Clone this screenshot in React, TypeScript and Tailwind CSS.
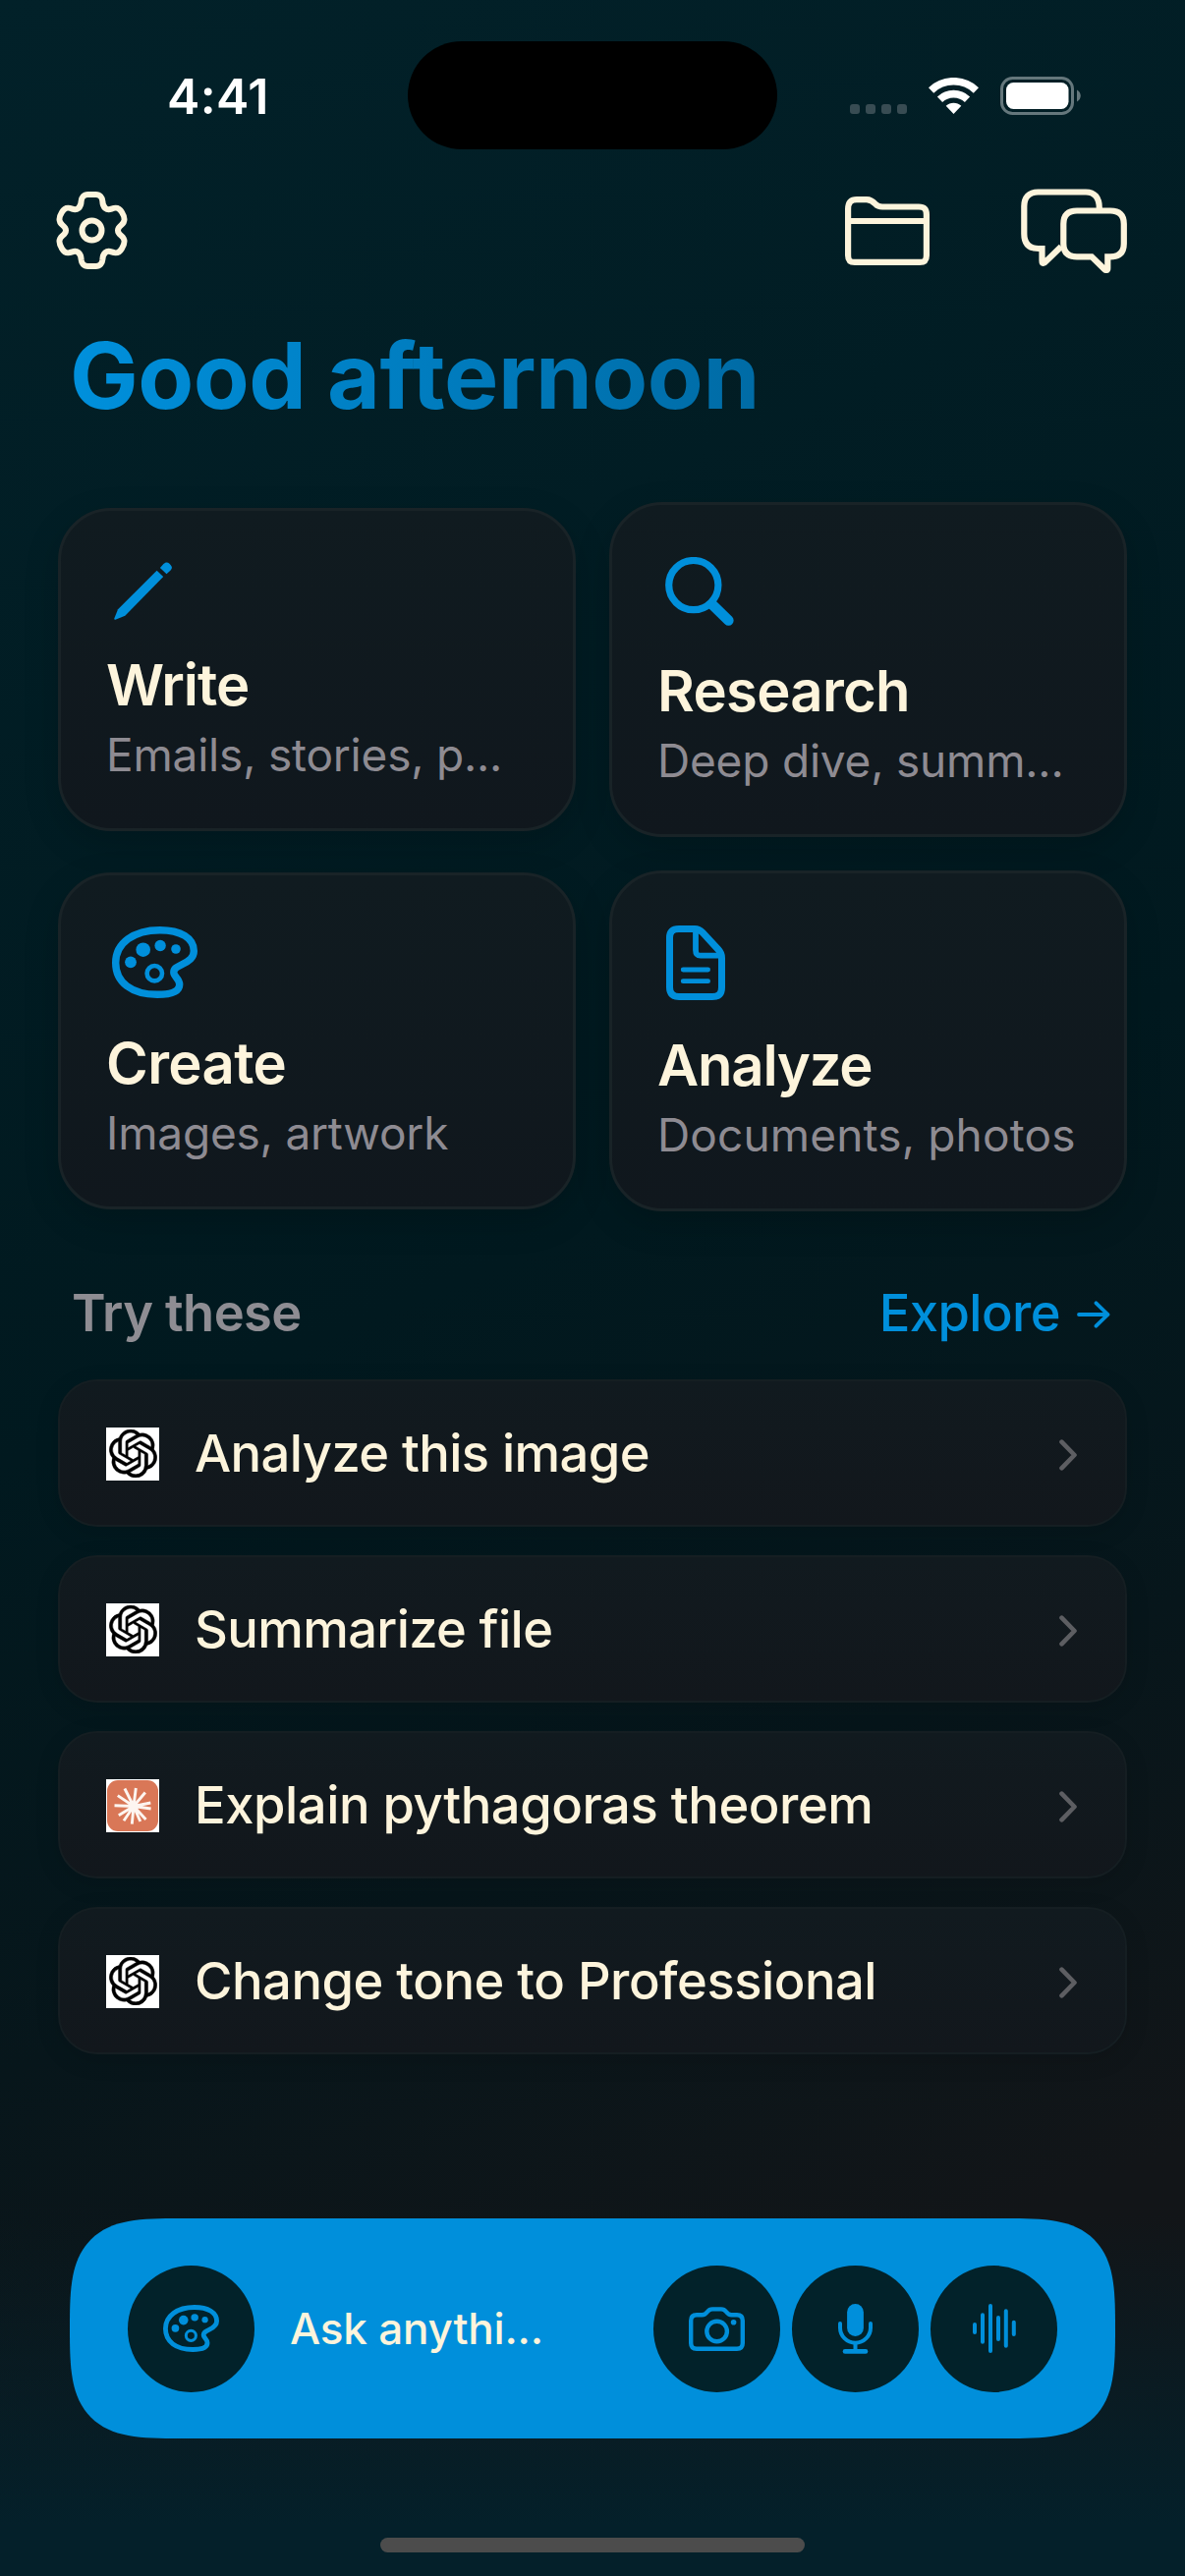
import type { ReactNode } from 'react';

function GearIcon() {
  return (
    <svg width="73" height="79" viewBox="0 0 73 79" fill="none" stroke="currentColor" strokeWidth="6">
      <path d="M32.5 3H40.5C45 3 47 6 47.3 9.5C47.6 16.5 51.5 19.5 56.5 17.6C61.5 15.6 64.5 16.6 67 21C71 27.5 70 31 66.5 34C61.8 37.8 61.8 41.2 66.5 45C70 48 71 51.5 67 58C64.5 62.4 61.5 63.4 56.5 61.4C51.5 59.5 47.6 62.5 47.3 69.5C47 73 45 76 40.5 76H32.5C28 76 26 73 25.7 69.5C25.4 62.5 21.5 59.5 16.5 61.4C11.5 63.4 8.5 62.4 6 58C2 51.5 3 48 6.5 45C11.2 41.2 11.2 37.8 6.5 34C3 31 2 27.5 6 21C8.5 16.6 11.5 15.6 16.5 17.6C21.5 19.5 25.4 16.5 25.7 9.5C26 6 28 3 32.5 3Z" />
      <circle cx="36.5" cy="39.5" r="10" />
    </svg>
  );
}

function FolderIcon() {
  return (
    <svg width="86" height="70" viewBox="0 0 86 70" fill="none" stroke="currentColor" strokeWidth="6.2">
      <path d="M3.1 13C3.1 6 6 3.1 12 3.1H22C26.5 3.1 28.5 5 31 7.8C33 10 34.5 10.5 38 10.5H75C81 10.5 82.9 13 82.9 18.5V60C82.9 65 81 66.9 76 66.9H10C5 66.9 3.1 65 3.1 60Z" />
      <path d="M3 25H83" />
    </svg>
  );
}

function ChatIcon() {
  return (
    <svg width="108" height="86" viewBox="0 0 108 86" fill="none" stroke="currentColor" strokeWidth="6.2">
      <path d="M79.8 20C79.8 9 75 3.5 66 3.5H17.5C8 3.5 3.3 9 3.3 18V46C3.3 56 8 61 18 61H21.5V73.5C21.5 76.5 23.5 76.5 25.5 74L41 59" />
      <path d="M57 22.5H91C100 22.5 104.8 27 104.8 36V56C104.8 65 100 69.3 91 69.3H88.3V81C88.3 83.5 86.5 83.5 85 82L72 69.3H57C48 69.3 43.3 65 43.3 56V36C43.3 27 48 22.5 57 22.5Z" />
    </svg>
  );
}

function PencilIcon() {
  return (
    <svg width="59" height="59" viewBox="0 0 59 59" fill="currentColor">
      <path d="M50.4 2C52.3 0 54.6 -0.2 56.5 1.8L57.6 3C59.4 4.9 59.4 6.8 57.6 8.5L53.5 12.2L46.9 5.9Z" />
      <path d="M43.6 8.7L50.2 15L11.3 54.7L1.4 58.7C0.5 59 0 58.4 0.3 57.6L4 48.3Z" />
    </svg>
  );
}

function SearchIcon() {
  return (
    <svg width="70" height="70" viewBox="0 0 70 70" fill="none" stroke="currentColor">
      <circle cx="28.8" cy="28.6" r="25.1" strokeWidth="7.2" />
      <path d="M48 48.5L64.4 64.6" strokeWidth="10.5" strokeLinecap="round" />
    </svg>
  );
}

function PaletteIcon({ className }: { className: string }) {
  return (
    <svg className={className} viewBox="0 0 87 73" fill="none" stroke="currentColor" strokeWidth="7.4">
      <path d="M48.7 3.7C70 3.7 83.3 12 83.3 25C83.3 32 78 35.2 72 38.2C65 41.7 62.8 43 62.8 46.8C62.8 51 68.7 53 68.7 59C68.7 66 60 69.3 46 69.3C20 69.3 3.7 57 3.7 37C3.7 17 22 3.7 48.7 3.7Z" />
      <circle cx="43.3" cy="47.7" r="7.7" strokeWidth="4.6" />
      <g fill="currentColor" stroke="none">
        <circle cx="19" cy="36.3" r="5.9" />
        <circle cx="31.7" cy="23.7" r="7.3" />
        <circle cx="49.1" cy="19.5" r="5.7" />
        <circle cx="65" cy="23" r="4.8" />
      </g>
    </svg>
  );
}

function DocumentIcon() {
  return (
    <svg width="60" height="76" viewBox="0 0 60 76" fill="none" stroke="currentColor">
      <path
        d="M13 3.5H29C33 3.5 34.5 4.5 37 7.2L53 24.5C55.8 27.5 56.5 29 56.5 33V63C56.5 70 53 72.5 47 72.5H13C6.5 72.5 3.5 69 3.5 63V12.5C3.5 6 6.5 3.5 13 3.5Z"
        strokeWidth="7"
      />
      <path d="M30 5V25C30 29 31.5 30.7 35 30.7H56" strokeWidth="5.8" />
      <path d="M17.2 45H42.6M17.2 56.7H42.6" strokeWidth="4.8" strokeLinecap="round" />
    </svg>
  );
}

function CameraIcon() {
  return (
    <svg width="57" height="45" viewBox="0 0 57 45" fill="none" stroke="currentColor" strokeWidth="4.4">
      <path d="M8 8.3H13.5C16.5 8.3 17.5 7 19 5C20.5 3 21.5 2.4 24 2.4H33C35.5 2.4 36.5 3 38 5C39.5 7 40.5 8.3 43.5 8.3H49C53 8.3 54.8 10 54.8 14V37C54.8 41 53 42.7 49 42.7H8C4 42.7 2.2 41 2.2 37V14C2.2 10 4 8.3 8 8.3Z" />
      <circle cx="28.6" cy="25" r="10.3" />
      <circle cx="45.6" cy="15.7" r="2.8" fill="currentColor" stroke="none" />
    </svg>
  );
}

function MicIcon() {
  return (
    <svg width="35" height="51" viewBox="0 0 35 51" fill="none" stroke="currentColor" strokeWidth="4" strokeLinecap="round">
      <rect x="9.1" y="0" width="16.8" height="33" rx="8.4" fill="currentColor" stroke="none" />
      <path d="M2 20V24.2A15.5 15.5 0 0 0 33 24.2V20" />
      <path d="M17.5 40V48" />
      <path d="M7 48.4H28" strokeWidth="4.6" />
    </svg>
  );
}

function WaveIcon() {
  return (
    <svg width="44" height="50" viewBox="0 0 44 50" stroke="currentColor" strokeWidth="4" strokeLinecap="round">
      <path d="M2 21V29M10 11.3V38.7M18 2V48M26 14V36M33.8 7.3V42.7M41.8 18.7V31" />
    </svg>
  );
}

function OpenAILogo() {
  return (
    <div className="mt-px flex size-[54px] shrink-0 items-center justify-center bg-white">
      <svg width="49" height="49" viewBox="0 0 24 24" fill="#000" stroke="#000" strokeWidth="0.25">
        <path d="M22.2819 9.8211a5.9847 5.9847 0 0 0-.5157-4.9108 6.0462 6.0462 0 0 0-6.5098-2.9A6.0651 6.0651 0 0 0 4.9807 4.1818a5.9847 5.9847 0 0 0-3.9977 2.9 6.0462 6.0462 0 0 0 .7427 7.0966 5.98 5.98 0 0 0 .511 4.9107 6.051 6.051 0 0 0 6.5146 2.9001A5.9847 5.9847 0 0 0 13.2599 24a6.0557 6.0557 0 0 0 5.7718-4.2058 5.9894 5.9894 0 0 0 3.9977-2.9001 6.0557 6.0557 0 0 0-.7475-7.0729zm-9.022 12.6081a4.4755 4.4755 0 0 1-2.8764-1.0408l.1419-.0804 4.7783-2.7582a.7948.7948 0 0 0 .3927-.6813v-6.7369l2.02 1.1686a.071.071 0 0 1 .038.052v5.5826a4.504 4.504 0 0 1-4.4945 4.4944zm-9.6607-4.1254a4.4708 4.4708 0 0 1-.5346-3.0137l.142.0852 4.783 2.7582a.7712.7712 0 0 0 .7806 0l5.8428-3.3685v2.3324a.0804.0804 0 0 1-.0332.0615L9.74 19.9502a4.4992 4.4992 0 0 1-6.1408-1.6464zM2.3408 7.8956a4.485 4.485 0 0 1 2.3655-1.9728V11.6a.7664.7664 0 0 0 .3879.6765l5.8144 3.3543-2.0201 1.1685a.0757.0757 0 0 1-.071 0l-4.8303-2.7865A4.504 4.504 0 0 1 2.3408 7.872zm16.5963 3.8558L13.1038 8.364 15.1192 7.2a.0757.0757 0 0 1 .071 0l4.8303 2.7913a4.4944 4.4944 0 0 1-.6765 8.1042v-5.6772a.79.79 0 0 0-.407-.667zm2.0107-3.0231l-.142-.0852-4.7735-2.7818a.7759.7759 0 0 0-.7854 0L9.409 9.2297V6.8974a.0662.0662 0 0 1 .0284-.0615l4.8303-2.7866a4.4992 4.4992 0 0 1 6.6802 4.66zM8.3065 12.863l-2.02-1.1638a.0804.0804 0 0 1-.038-.0567V6.0742a4.4992 4.4992 0 0 1 7.3757-3.4537l-.142.0805L8.704 5.459a.7948.7948 0 0 0-.3927.6813zm1.0976-2.3654l2.602-1.4998 2.6069 1.4998v2.9994l-2.5974 1.4997-2.6067-1.4997Z" />
      </svg>
    </div>
  );
}

function ClaudeLogo() {
  return (
    <svg className="mt-px shrink-0" width="54" height="54" viewBox="0 0 54 54">
      <rect width="54" height="54" fill="#fff" />
      <rect x="1" y="1" width="52" height="52" rx="11" fill="#d97757" />
      <path
        d="M28 27.5L18.9 9.5M28 27.5L30.3 9M28 27.5L39.8 13.5M28 27.5L45.3 24M28 27.5L45.6 30M28 27.5L40.5 41M28 27.5L34.8 43M28 27.5L26.3 45.6M28 27.5L18 42.3M28 27.5L12.8 36.8M28 27.5L8.5 26.8M28 27.5L11.8 16.6"
        stroke="#fdf5f0"
        strokeWidth="2.9"
      />
      <circle cx="28" cy="27.5" r="5" fill="#fdf5f0" />
    </svg>
  );
}

function StatusBar() {
  return (
    <div className="grid h-[194px] grid-cols-[415px_376px_1fr] items-center">
      <div className="pt-px pl-[170px] text-[50px] leading-[60px] font-semibold tracking-[0.4px] text-white">4:41</div>
      <div className="h-[110px] rounded-full bg-black" />
      <div className="flex items-center pl-[74px]">
        <div className="mt-[28px] flex gap-[6px]">
          {[0, 1, 2, 3].map((i) => (
            <div key={i} className="size-[10px] rounded-[3px] bg-[#384c53]" />
          ))}
        </div>
        <svg className="ml-[22px]" width="51" height="37" viewBox="0 0 51 37" fill="none" stroke="#fff" strokeWidth="7.6">
          <path d="M2.6 12.9A33.2 33.2 0 0 1 48.4 12.9" />
          <path d="M11.5 22.2A20.4 20.4 0 0 1 39.5 22.2" />
          <path d="M25.5 37L17.7 28.8A11.3 11.3 0 0 1 33.3 28.8Z" fill="#fff" stroke="none" />
        </svg>
        <svg className="ml-[22px]" width="82" height="39" viewBox="0 0 82 39" fill="none">
          <rect x="1.5" y="1.5" width="72" height="36" rx="11" stroke="#65777c" strokeWidth="3" />
          <rect x="6" y="6" width="63.5" height="27" rx="7.5" fill="#fff" />
          <path d="M78 13.5C83 16 83 23 78 25.5Z" fill="#65777c" />
        </svg>
      </div>
    </div>
  );
}

const actions = [
  {
    title: 'Write',
    titleTracking: 'tracking-[-1px]',
    subtitle: 'Emails, stories, p...',
    subtitleTracking: 'tracking-[-0.2px]',
    icon: <PencilIcon />,
    height: 'h-[329px]',
    iconOffset: 'ml-[8px]',
  },
  {
    title: 'Research',
    titleTracking: 'tracking-[-0.7px]',
    subtitle: 'Deep dive, summ...',
    subtitleTracking: 'tracking-[-0.2px]',
    icon: <SearchIcon />,
    height: 'h-[341px]',
    iconOffset: 'ml-[8px]',
  },
  {
    title: 'Create',
    titleTracking: 'tracking-[-0.6px]',
    subtitle: 'Images, artwork',
    subtitleTracking: 'tracking-[-0.2px]',
    icon: <PaletteIcon className="h-[73px] w-[87px]" />,
    height: 'h-[343px]',
    iconOffset: 'ml-[6px]',
  },
  {
    title: 'Analyze',
    titleTracking: 'tracking-[-1.2px]',
    subtitle: 'Documents, photos',
    subtitleTracking: 'tracking-[0.15px]',
    icon: <DocumentIcon />,
    height: 'h-[347px]',
    iconOffset: 'ml-[9px]',
  },
];

const suggestions = [
  { label: 'Analyze this image', logo: <OpenAILogo />, tracking: 'tracking-[-0.6px]' },
  { label: 'Summarize file', logo: <OpenAILogo />, tracking: 'tracking-[-0.65px]' },
  { label: 'Explain pythagoras theorem', logo: <ClaudeLogo />, tracking: 'tracking-[-0.45px]' },
  { label: 'Change tone to Professional', logo: <OpenAILogo />, tracking: 'tracking-[-0.5px]' },
];

function RoundButton({ children }: { children: ReactNode }) {
  return (
    <button className="flex size-[129px] shrink-0 items-center justify-center rounded-full bg-[#02222a] text-[#008fdb]">
      {children}
    </button>
  );
}

export default function App() {
  return (
    <div className="h-[2622px] w-[1206px] overflow-hidden bg-[linear-gradient(158deg,#022129_0%,#01191f_48%,#07161b_68%,#121518_86%,#121518_100%)] font-['Inter',sans-serif]">
      <div className="flex h-full flex-col bg-[linear-gradient(to_bottom,transparent_86%,#04202a_98%)]">
        <StatusBar />

        <header className="-mt-px mb-px flex h-[84px] items-center pr-[59px] pl-[57px] text-[#fdf4dc]">
          <div className="-mt-[2px]">
            <GearIcon />
          </div>
          <div className="ml-auto flex items-center gap-[93px]">
            <FolderIcon />
            <ChatIcon />
          </div>
        </header>

        <h1 className="mt-[48px] ml-[71px] w-[706px] bg-linear-to-r from-[#0090dc] to-[#006ba5] bg-clip-text text-[93px] leading-[112px] font-bold tracking-[-0.5px] whitespace-nowrap text-transparent">
          Good afternoon
        </h1>

        <div className="mt-[73px] grid grid-cols-2 items-center gap-[34px] px-[59px]">
          {actions.map((action) => (
            <div
              key={action.title}
              className={`flex flex-col justify-end rounded-[54px] border-[3px] border-[#192327] bg-linear-to-b from-[#101b20] to-[#10171d] pr-[30px] pb-[46px] pl-[46px] shadow-[0_12px_36px_rgba(0,0,0,0.16)] ${action.height}`}
            >
              <div className={`mb-[31px] text-[#008fdb] ${action.iconOffset}`}>{action.icon}</div>
              <div className={`text-[58px] leading-[70px] font-semibold text-[#fdf4dc] ${action.titleTracking}`}>{action.title}</div>
              <div className={`mt-[7px] text-[46px] leading-[58px] whitespace-nowrap text-[#8e8b92] ${action.subtitleTracking}`}>
                {action.subtitle}
              </div>
            </div>
          ))}
        </div>

        <div className="mt-[71px] flex items-center justify-between pr-[76px] pl-[73px] text-[52.5px] leading-[64px]">
          <h2 className="font-semibold tracking-[-0.6px] text-[#8e8d93]">Try these</h2>
          <div className="flex items-center gap-[17px] font-medium tracking-[-0.6px] text-[#008fdb]">
            Explore
            <svg className="mt-[3px]" width="34" height="28" viewBox="0 0 34 28" fill="none" stroke="currentColor" strokeWidth="3.8" strokeLinecap="round" strokeLinejoin="round">
              <path d="M2 14H31.5M19.5 2.3L31.5 14L19.5 25.7" />
            </svg>
          </div>
        </div>

        <div className="mt-[36px] flex flex-col gap-[29px] px-[59px]">
          {suggestions.map((item) => (
            <div
              key={item.label}
              className="flex h-[150px] items-center rounded-[40px] border-2 border-[#151e22] bg-linear-to-b from-[#111a1f] to-[#12171c] pr-[49px] pl-[47px] shadow-[0_6px_24px_rgba(0,0,0,0.12)]"
            >
              {item.logo}
              <span className={`ml-[36px] text-[52.5px] leading-[64px] font-medium text-[#fdf4dc] ${item.tracking}`}>{item.label}</span>
              <svg className="mt-[3px] ml-auto" width="18" height="32" viewBox="0 0 18 32" fill="none" stroke="#5d5e62" strokeWidth="4.6" strokeLinecap="round" strokeLinejoin="round">
                <path d="M2.5 2.7L15.5 16L2.5 29.3" />
              </svg>
            </div>
          ))}
        </div>

        <div className="mx-[71px] mt-[167px] flex h-[224px] items-center rounded-[80px] bg-[#008fdb] px-[59px] supports-[corner-shape:squircle]:rounded-[112px] supports-[corner-shape:squircle]:[corner-shape:superellipse(1.7)]">
          <RoundButton>
            <PaletteIcon className="h-[48px] w-[57px]" />
          </RoundButton>
          <span className="ml-[36px] text-[44px] leading-[56px] font-medium tracking-[-0.2px] whitespace-nowrap text-[#fdf4dc]">
            Ask anythi...
          </span>
          <div className="ml-auto flex gap-[12px]">
            <RoundButton>
              <CameraIcon />
            </RoundButton>
            <RoundButton>
              <MicIcon />
            </RoundButton>
            <RoundButton>
              <WaveIcon />
            </RoundButton>
          </div>
        </div>

        <div className="mx-auto mt-[101px] h-[15px] w-[432px] shrink-0 rounded-full bg-[#4c4c4c]" />
      </div>
    </div>
  );
}
